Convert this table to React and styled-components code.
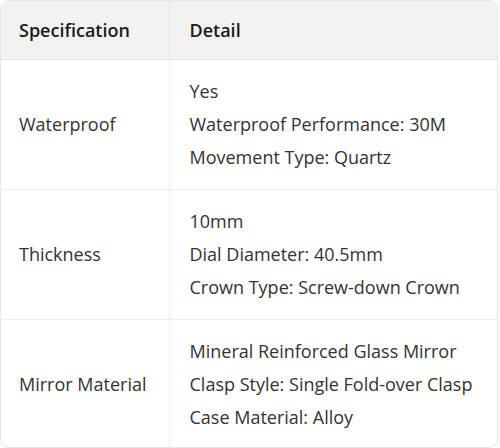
import React from 'react';
import styled, { createGlobalStyle } from 'styled-components';

const GlobalStyle = createGlobalStyle`
  body {
    margin: 0;
    background: #ffffff;
    font-family: "Open Sans", "Noto Sans", sans-serif;
  }
`;

const Wrapper = styled.div`
  width: 498px;
  height: 448px;
  border: 1px solid #e6e6e6;
  border-radius: 9px;
  overflow: hidden;
  box-sizing: border-box;
`;

const Table = styled.table`
  width: 100%;
  border-collapse: collapse;
  table-layout: fixed;
`;

const HeadCell = styled.th`
  background: #f2f2f2;
  height: 58px;
  padding: 0 0 0 ${p => (p.first ? '18px' : '20px')};
  text-align: left;
  font-size: 18px;
  font-weight: 600;
  color: #1a1a1a;
  border-bottom: 1px solid #e2e2e2;
  border-left: ${p => (p.first ? 'none' : '1px solid #e6e6e6')};
  width: ${p => (p.first ? '168px' : 'auto')};
  box-sizing: border-box;
`;

const Row = styled.tr`
  border-top: ${p => (p.first ? 'none' : '1px solid #ececec')};
`;

const Cell = styled.td`
  height: 129px;
  padding: 0 0 0 ${p => (p.first ? '18px' : '20px')};
  font-size: 18px;
  color: #333333;
  border-left: ${p => (p.first ? 'none' : '1px solid #ececec')};
  vertical-align: middle;
`;

const Line = styled.div`
  line-height: 33px;
  white-space: nowrap;
`;

const rows = [
  {
    spec: 'Waterproof',
    detail: ['Yes', 'Waterproof Performance: 30M', 'Movement Type: Quartz'],
  },
  {
    spec: 'Thickness',
    detail: ['10mm', 'Dial Diameter: 40.5mm', 'Crown Type: Screw-down Crown'],
  },
  {
    spec: 'Mirror Material',
    detail: [
      'Mineral Reinforced Glass Mirror',
      'Clasp Style: Single Fold-over Clasp',
      'Case Material: Alloy',
    ],
  },
];

export default function App() {
  return (
    <>
      <GlobalStyle />
      <Wrapper>
        <Table>
          <thead>
            <tr>
              <HeadCell first>Specification</HeadCell>
              <HeadCell>Detail</HeadCell>
            </tr>
          </thead>
          <tbody>
            {rows.map((r, i) => (
              <Row key={r.spec} first={i === 0}>
                <Cell first>{r.spec}</Cell>
                <Cell>
                  {r.detail.map(d => (
                    <Line key={d}>{d}</Line>
                  ))}
                </Cell>
              </Row>
            ))}
          </tbody>
        </Table>
      </Wrapper>
    </>
  );
}
